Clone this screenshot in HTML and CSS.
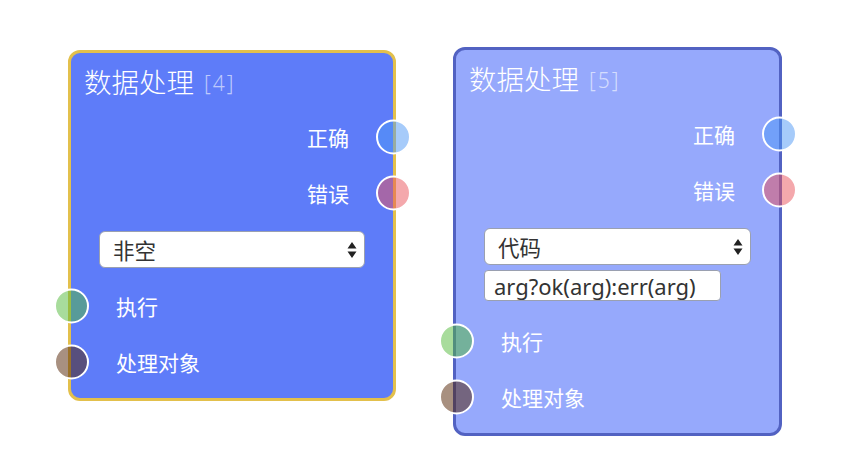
FILE: index.html
```html
<!DOCTYPE html>
<html lang="zh">
<head>
<meta charset="utf-8">
<link rel="stylesheet" href="styles.css">
</head>
<body>
<div class="canvas">
  <div class="node node-active">
    <div class="title">数据处理<span class="idx">[4]</span></div>
    <div class="row out"><span>正确</span><i class="port p-blue"></i></div>
    <div class="row out"><span>错误</span><i class="port p-red"></i></div>
    <div class="controls">
      <div class="select"><span>非空</span>
        <svg class="arrows" width="10" height="18" viewBox="0 0 10 18"><path d="M5 1 L9.5 7.5 H0.5 Z M5 17 L9.5 10.5 H0.5 Z" fill="#222"/></svg>
      </div>
    </div>
    <div class="row in"><i class="port p-green"></i><span>执行</span></div>
    <div class="row in"><i class="port p-brown"></i><span>处理对象</span></div>
  </div>

  <div class="node node-light">
    <div class="title">数据处理<span class="idx">[5]</span></div>
    <div class="row out"><span>正确</span><i class="port p-blue"></i></div>
    <div class="row out"><span>错误</span><i class="port p-red"></i></div>
    <div class="controls">
      <div class="select"><span>代码</span>
        <svg class="arrows" width="10" height="18" viewBox="0 0 10 18"><path d="M5 1 L9.5 7.5 H0.5 Z M5 17 L9.5 10.5 H0.5 Z" fill="#222"/></svg>
      </div>
      <div class="code">arg?ok(arg):err(arg)</div>
    </div>
    <div class="row in"><i class="port p-green"></i><span>执行</span></div>
    <div class="row in"><i class="port p-brown"></i><span>处理对象</span></div>
  </div>
</div>
</body>
</html>
```

FILE: styles.css
```css
html, body {
  margin: 0;
  padding: 0;
  background: #ffffff;
}
body {
  font-family: "Noto Sans CJK SC", "Noto Sans", sans-serif;
}
.canvas {
  display: flex;
  align-items: flex-start;
  gap: 57px;
  padding: 47px 0 0 68px;
}
.node {
  box-sizing: border-box;
  width: 328px;
  border: 3px solid;
  border-radius: 12px;
  padding-bottom: 8px;
  color: #ffffff;
}
.node-active {
  margin-top: 3px;
  background: #5e7cf9;
  border-color: #e3c04c;
}
.node-light {
  width: 329px;
  background: #96a9fc;
  border-color: #5262c2;
}
.title {
  height: 56px;
  display: flex;
  align-items: center;
  padding-left: 13px;
  font-size: 27.5px;
  font-weight: 300;
}
.idx {
  font-family: "Noto Sans", sans-serif;
  font-weight: 300;
  font-size: 21px;
  letter-spacing: 2px;
  color: rgba(255, 255, 255, 0.6);
  margin: 3px 0 0 10px;
}
.row {
  position: relative;
  height: 56px;
  display: flex;
  align-items: center;
  font-size: 21px;
}
.row.out {
  justify-content: flex-end;
  padding-right: 44px;
}
.row.in {
  padding-left: 45px;
}
.port {
  position: absolute;
  top: 50%;
  width: 35px;
  height: 35px;
  box-sizing: border-box;
  border: 2px solid #ffffff;
  border-radius: 50%;
  transform: translateY(-50%);
}
.row.out .port { right: -17.5px; }
.row.in .port { left: -17.5px; }
.p-blue { background: rgba(77, 151, 246, 0.5); }
.p-red { background: rgba(233, 81, 90, 0.5); }
.p-green { background: rgba(81, 185, 57, 0.5); }
.p-brown { background: rgba(81, 33, 1, 0.5); }
.controls {
  padding: 10px 28px;
}
.select {
  position: relative;
  box-sizing: border-box;
  height: 37px;
  background: #ffffff;
  border: 1px solid #9aa0b0;
  border-radius: 6px;
  display: flex;
  align-items: center;
  padding-left: 13px;
  font-size: 21.5px;
  color: #333333;
}
.arrows {
  position: absolute;
  right: 7px;
  top: 9px;
}
.code {
  box-sizing: border-box;
  width: 237px;
  height: 31px;
  margin: 5px 0 2px;
  background: #ffffff;
  border: 1px solid #9aa0b0;
  border-radius: 4px;
  display: flex;
  align-items: center;
  padding-left: 9px;
  font-family: "Noto Sans", sans-serif;
  font-size: 22px;
  color: #333333;
}
```
